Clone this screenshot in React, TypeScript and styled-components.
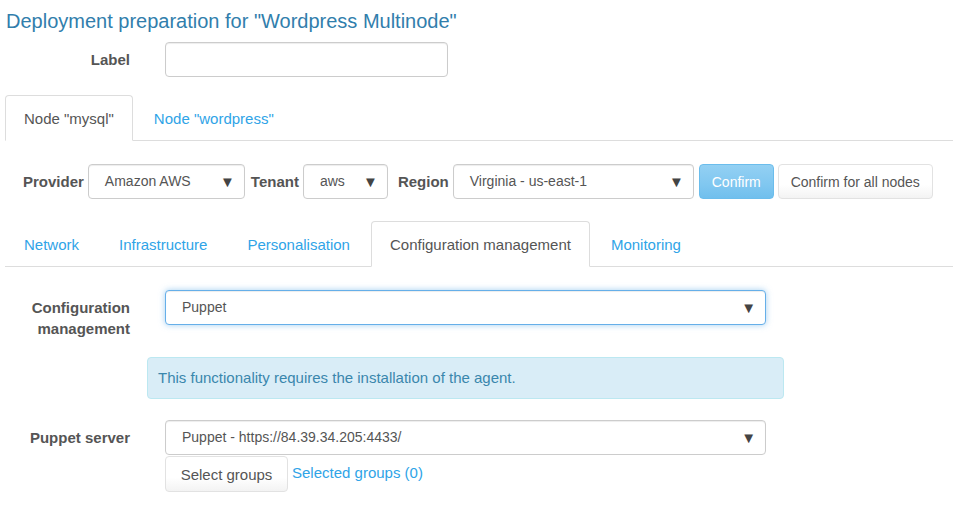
import React from "react";
import styled, { createGlobalStyle } from "styled-components";

const GlobalStyle = createGlobalStyle`
  html, body {
    margin: 0;
    padding: 0;
    background: #ffffff;
  }
  body {
    font-family: "Liberation Sans", Arial, Helvetica, sans-serif;
    font-size: 15px;
    line-height: 21px;
    color: #555555;
  }
  * { box-sizing: border-box; }
`;

const Page = styled.div`
  width: 953px;
  padding: 10px 0 0 0;
`;

const Title = styled.h3`
  margin: 0 0 0 6px;
  font-size: 20px;
  line-height: 22px;
  font-weight: normal;
  color: #317eac;
`;

const FormRow = styled.div<{ $mt: number }>`
  display: flex;
  align-items: flex-start;
  margin-top: ${(p) => p.$mt}px;
`;

const RowLabel = styled.label`
  width: 130px;
  flex: none;
  text-align: right;
  font-weight: bold;
  color: #555555;
  padding-top: 7px;
  line-height: 21px;
  margin-right: 35px;
`;

const TextInput = styled.div`
  width: 283px;
  height: 35px;
  border: 1px solid #cccccc;
  border-radius: 4px;
  background: #fff;
  box-shadow: inset 0 1px 1px rgba(0, 0, 0, 0.075);
`;

const TabNav = styled.ul<{ $mt: number }>`
  display: flex;
  list-style: none;
  margin: ${(p) => p.$mt}px 0 0 5px;
  padding: 0;
  border-bottom: 1px solid #dddddd;
  height: 46px;
`;

const TabItem = styled.li<{ $active?: boolean }>`
  margin-right: 2px;
  margin-bottom: -1px;
  height: 46px;
  padding: 0 18px;
  display: flex;
  align-items: center;
  border: 1px solid ${(p) => (p.$active ? "#dddddd" : "transparent")};
  border-bottom-color: ${(p) => (p.$active ? "#ffffff" : "transparent")};
  border-radius: 4px 4px 0 0;
  background: ${(p) => (p.$active ? "#ffffff" : "transparent")};
  color: ${(p) => (p.$active ? "#555555" : "#2fa4e7")};
  white-space: nowrap;
`;

const Toolbar = styled.div`
  display: flex;
  align-items: center;
  margin: 23px 0 0 23px;
  font-size: 14px;
`;

const InlineLabel = styled.span<{ $ml?: number }>`
  font-size: 15px;
  font-weight: bold;
  color: #555555;
  margin-left: ${(p) => p.$ml ?? 0}px;
  margin-right: 4px;
`;

const SelectBox = styled.div<{ $w: number; $focus?: boolean; $ml?: number }>`
  width: ${(p) => p.$w}px;
  height: 35px;
  margin-left: ${(p) => p.$ml ?? 0}px;
  flex: none;
  display: flex;
  align-items: center;
  justify-content: space-between;
  padding: 0 9px 0 16px;
  border: 1px solid ${(p) => (p.$focus ? "#66afe9" : "#cccccc")};
  border-radius: 4px;
  background: #fff;
  color: #555555;
  font-size: 14px;
  box-shadow: ${(p) =>
    p.$focus
      ? "inset 0 1px 1px rgba(0,0,0,.075), 0 0 6px rgba(102,175,233,.6)"
      : "inset 0 1px 1px rgba(0,0,0,.075)"};
  white-space: nowrap;
`;

const Arrow = styled.span`
  font-size: 15px;
  color: #444444;
  line-height: 1;
`;

const PrimaryButton = styled.button`
  margin-left: 5px;
  width: 75px;
  height: 35px;
  flex: none;
  font-family: inherit;
  font-size: 14px;
  color: #ffffff;
  border: 1px solid #6bbdec;
  border-radius: 4px;
  background: linear-gradient(#93d0f3, #80c7f0 60%, #70bfed);
  padding: 0;
`;

const DefaultButton = styled.button<{ $w: number; $h: number; $ml?: number; $fs: number }>`
  margin-left: ${(p) => p.$ml ?? 0}px;
  width: ${(p) => p.$w}px;
  height: ${(p) => p.$h}px;
  flex: none;
  font-family: inherit;
  font-size: ${(p) => p.$fs}px;
  color: #555555;
  border: 1px solid #e2e2e2;
  border-radius: 4px;
  background: linear-gradient(#ffffff, #ffffff 60%, #f3f3f3);
  padding: 0;
`;

const ContentCol = styled.div`
  display: flex;
  flex-direction: column;
  align-items: flex-start;
`;

const ButtonLine = styled.div`
  display: flex;
  align-items: center;
  margin-top: 1px;
`;

const LinkText = styled.span`
  color: #2fa4e7;
  margin-left: 4px;
  margin-top: -3px;
`;

const Alert = styled.div`
  margin: 18px 0 0 147px;
  width: 637px;
  height: 42px;
  padding: 10px 10px;
  line-height: 20px;
  background: #d9edf7;
  border: 1px solid #bce8f1;
  border-radius: 4px;
  color: #3a87ad;
`;

export default function App() {
  return (
    <Page>
      <GlobalStyle />
      <Title>Deployment preparation for "Wordpress Multinode"</Title>

      <FormRow $mt={10}>
        <RowLabel>Label</RowLabel>
        <TextInput />
      </FormRow>

      <TabNav $mt={18}>
        <TabItem $active>Node "mysql"</TabItem>
        <TabItem>Node "wordpress"</TabItem>
      </TabNav>

      <Toolbar>
        <InlineLabel>Provider</InlineLabel>
        <SelectBox $w={157}>
          Amazon AWS<Arrow>▼</Arrow>
        </SelectBox>
        <InlineLabel $ml={6}>Tenant</InlineLabel>
        <SelectBox $w={85}>
          aws<Arrow>▼</Arrow>
        </SelectBox>
        <InlineLabel $ml={10}>Region</InlineLabel>
        <SelectBox $w={241}>
          Virginia - us-east-1<Arrow>▼</Arrow>
        </SelectBox>
        <PrimaryButton>Confirm</PrimaryButton>
        <DefaultButton $w={155} $h={35} $ml={4} $fs={14}>
          Confirm for all nodes
        </DefaultButton>
      </Toolbar>

      <TabNav $mt={22}>
        <TabItem>Network</TabItem>
        <TabItem>Infrastructure</TabItem>
        <TabItem>Personalisation</TabItem>
        <TabItem $active>Configuration management</TabItem>
        <TabItem>Monitoring</TabItem>
      </TabNav>

      <FormRow $mt={23}>
        <RowLabel>
          Configuration
          <br />
          management
        </RowLabel>
        <SelectBox $w={601} $focus>
          Puppet<Arrow>▼</Arrow>
        </SelectBox>
      </FormRow>

      <Alert>This functionality requires the installation of the agent.</Alert>

      <FormRow $mt={21}>
        <RowLabel>Puppet server</RowLabel>
        <ContentCol>
          <SelectBox $w={601}>
            Puppet - https://84.39.34.205:4433/<Arrow>▼</Arrow>
          </SelectBox>
          <ButtonLine>
            <DefaultButton $w={123} $h={36} $fs={15}>
              Select groups
            </DefaultButton>
            <LinkText>Selected groups (0)</LinkText>
          </ButtonLine>
        </ContentCol>
      </FormRow>
    </Page>
  );
}
